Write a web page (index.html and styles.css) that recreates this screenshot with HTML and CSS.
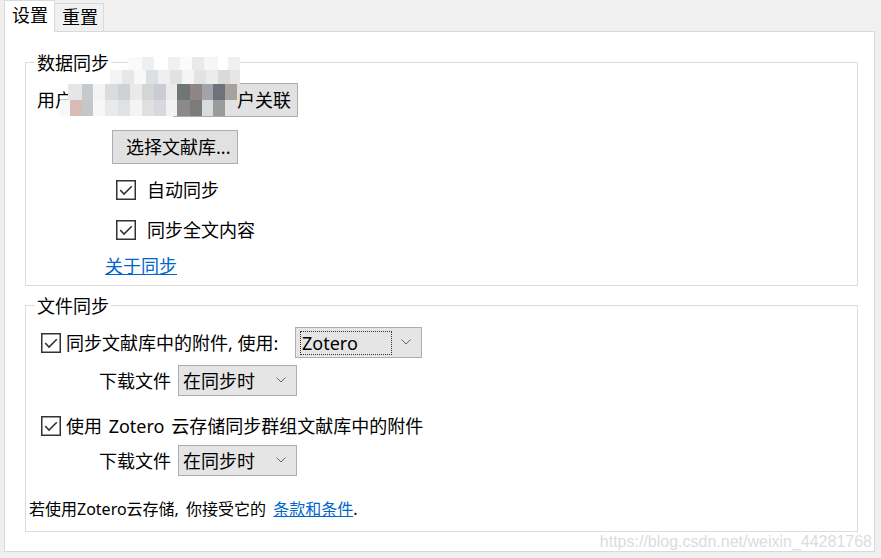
FILE: index.html
```html
<!DOCTYPE html>
<html lang="zh-CN">
<head>
<meta charset="utf-8">
<title>同步设置</title>
<link rel="stylesheet" href="styles.css">
</head>
<body>
<div class="window">
  <div class="tabs">
    <div class="tab active">设置</div>
    <div class="tab">重置</div>
  </div>
  <div class="panel">
    <div class="group g1">
      <span class="legend">数据同步</span>
      <div class="account">
        <span class="acc-label">用户名:</span>
        <button class="btn unlink">取消账户关联</button>
      </div>
      <div class="mosaic">
        <div class="mrow ma"></div>
        <div class="mrow mb"></div>
        <div class="mrow mc"></div>
        <div class="mrow md"></div>
      </div>
      <button class="btn choose">选择文献库...</button>
      <label class="check c-auto">
        <svg class="box" width="20" height="20" viewBox="0 0 20 20"><rect x="0.75" y="0.75" width="18.5" height="18.5" fill="#fff" stroke="#333" stroke-width="1.5"/><polyline points="4.2,10 8,14 15.8,6.2" fill="none" stroke="#333" stroke-width="1.6"/></svg>
        <span>自动同步</span>
      </label>
      <label class="check c-full">
        <svg class="box" width="20" height="20" viewBox="0 0 20 20"><rect x="0.75" y="0.75" width="18.5" height="18.5" fill="#fff" stroke="#333" stroke-width="1.5"/><polyline points="4.2,10 8,14 15.8,6.2" fill="none" stroke="#333" stroke-width="1.6"/></svg>
        <span>同步全文内容</span>
      </label>
      <a class="link about" href="#">关于同步</a>
    </div>

    <div class="group g2">
      <span class="legend">文件同步</span>
      <div class="frow r1">
        <label class="check small opt-label">
          <svg class="box" width="20" height="20" viewBox="0 0 20 20"><rect x="0.75" y="0.75" width="18.5" height="18.5" fill="#fff" stroke="#333" stroke-width="1.5"/><polyline points="4.2,10 8,14 15.8,6.2" fill="none" stroke="#333" stroke-width="1.6"/></svg>
          <span>同步文献库中的附件, 使用:</span>
        </label>
        <div class="select zotero">
          <span class="focus">Zotero</span>
          <svg class="chev" width="10" height="6" viewBox="0 0 10 6"><polyline points="0.5,0.5 5,5 9.5,0.5" fill="none" stroke="#666" stroke-width="1"/></svg>
        </div>
      </div>
      <div class="frow dl">
        <span class="dl-label">下载文件</span>
        <div class="select when">
          <span>在同步时</span>
          <svg class="chev" width="10" height="6" viewBox="0 0 10 6"><polyline points="0.5,0.5 5,5 9.5,0.5" fill="none" stroke="#666" stroke-width="1"/></svg>
        </div>
      </div>
      <div class="frow r2">
        <label class="check small">
          <svg class="box" width="20" height="20" viewBox="0 0 20 20"><rect x="0.75" y="0.75" width="18.5" height="18.5" fill="#fff" stroke="#333" stroke-width="1.5"/><polyline points="4.2,10 8,14 15.8,6.2" fill="none" stroke="#333" stroke-width="1.6"/></svg>
          <span class="wide">使用 Zotero 云存储同步群组文献库中的附件</span>
        </label>
      </div>
      <div class="frow dl">
        <span class="dl-label">下载文件</span>
        <div class="select when">
          <span>在同步时</span>
          <svg class="chev" width="10" height="6" viewBox="0 0 10 6"><polyline points="0.5,0.5 5,5 9.5,0.5" fill="none" stroke="#666" stroke-width="1"/></svg>
        </div>
      </div>
      <div class="terms">若使用Zotero云存储, 你接受它的 <a class="link" href="#">条款和条件</a>.</div>
    </div>
    <div class="watermark">https://blog.csdn.net/weixin_44281768</div>
  </div>
</div>
</body>
</html>
```

FILE: styles.css
```css
* { box-sizing: border-box; }
html, body {
  margin: 0;
  padding: 0;
  background: #f0f0f0;
}
body {
  font-family: "Noto Sans", "Noto Sans CJK SC", sans-serif;
  font-size: 18px;
  line-height: 22px;
  color: #000;
  width: 881px;
  height: 558px;
  overflow: hidden;
}
.tabs {
  display: flex;
  align-items: flex-end;
  height: 31px;
  padding-left: 4px;
}
.tab {
  font-size: 18px;
  line-height: 24px;
  height: 28px;
  padding: 1px 5px 0 7px;
  border: 1px solid #d9d9d9;
  border-left: none;
  border-bottom: none;
  background: #f0f0f0;
}
.tab.active {
  height: 32px;
  margin-bottom: -1px;
  padding: 2px 6px 0 7px;
  border-left: 1px solid #d9d9d9;
  background: #fff;
  position: relative;
  z-index: 1;
}
.panel {
  position: relative;
  margin: 0 6px 0 4px;
  height: 521px;
  border: 1px solid #d9d9d9;
  background: #fff;
  padding: 30px 16px 0 20px;
}
.group {
  position: relative;
  border: 1px solid #dcdcdc;
  display: flex;
  flex-direction: column;
  align-items: flex-start;
}
.g1 { height: 224px; }
.g2 { height: 227px; margin-top: 19px; }
.legend {
  position: absolute;
  top: -11px;
  left: 9px;
  padding: 0 2px;
  background: #fff;
  line-height: 22px;
  z-index: 1;
}
.btn {
  font: inherit;
  color: #000;
  background: #e1e1e1;
  border: 1px solid #adadad;
  height: 34px;
  margin: 0;
  text-align: left;
}
.account {
  display: flex;
  align-items: center;
  height: 34px;
  margin-top: 20px;
  padding-left: 11px;
}
.acc-label { width: 136px; }
.unlink { padding: 0 6px 0 9px; }
.mosaic {
  position: absolute;
  left: 0;
  top: 0;
  z-index: 2;
}
.mrow { position: absolute; }
.ma {
  left: 102px; top: -6px; width: 112px; height: 13px;
  background: linear-gradient(to right, #fafafa 0 14px, #efefef 14px 26px, #ffffff 26px 40px, #f1f1f1 40px 52px, #fbfbfb 52px 64px, #e9e9e9 64px 76px, #f6f6f6 76px 90px, #ffffff 90px 100px, #f0f0f0 100px);
}
.mb {
  left: 84px; top: 7px; width: 130px; height: 14px;
  background: linear-gradient(to right, #f4f4f4 0 12px, #e7e7e7 12px 24px, #f8f8f8 24px 36px, #dde0e3 36px 48px, #efefef 48px 60px, #e2e2e2 60px 72px, #f5f5f5 72px 84px, #e3e3e3 84px 96px, #ececec 96px 108px, #dadada 108px 120px, #e6e6e6 120px);
}
.mc {
  left: 42px; top: 21px; width: 169px; height: 16px;
  background: linear-gradient(to right, #e6e6e6 0 14px, #c6cacd 14px 25px, #f3f3f3 25px 37px, #dcdcdc 37px 50px, #ced2d5 50px 62px, #eaeaea 62px 74px, #d5d5d5 74px 86px, #c9ccd0 86px 98px, #ebebeb 98px 109px, #6f7774 109px 122px, #8f8584 122px 134px, #a3a4a9 134px 145px, #6f727d 145px 157px, #a6a29f 157px);
}
.md {
  left: 34px; top: 37px; width: 177px; height: 16px;
  background: linear-gradient(to right, #f7f7f7 0 10px, #d6bcb4 10px 22px, #c3c7ca 22px 33px, #f7f7f7 33px 45px, #e9e9e9 45px 58px, #dfe2e4 58px 70px, #f4f4f4 70px 82px, #e0e0e0 82px 94px, #d7d9dc 94px 106px, #f2f2f2 106px 117px, #8a8a8a 117px 130px, #7d7a7a 130px 142px, #d8dcdf 142px 153px, #9b9b9b 153px 165px, #e2e2e2 165px);
}
.choose {
  margin-top: 13px;
  margin-left: 86px;
  width: 126px;
  padding: 0 0 0 13px;
  white-space: nowrap;
}
.check {
  display: flex;
  align-items: center;
  height: 24px;
  gap: 11px;
  white-space: nowrap;
}
.check .box { flex: none; display: block; }
.c-auto { margin-top: 14px; margin-left: 90px; }
.c-full { margin-top: 16px; margin-left: 90px; }
.link {
  color: #0066cc;
  text-decoration: underline;
}
.about {
  display: block;
  margin-top: 12px;
  margin-left: 79px;
  line-height: 24px;
  height: 24px;
}
.frow {
  display: flex;
  align-items: center;
}
.check.small { gap: 5px; }
.wide { word-spacing: 2px; }
.r1 { margin-top: 21px; height: 31px; padding-left: 15px; }
.opt-label { width: 254px; }
.dl { margin-top: 7px; height: 31px; padding-left: 73px; }
.r2 { margin-top: 18px; height: 24px; padding-left: 15px; }
.dl-label { width: 79px; white-space: nowrap; }
.select {
  position: relative;
  display: flex;
  align-items: center;
  height: 31px;
  border: 1px solid #adadad;
  background: #e5e5e5;
  font-size: 18px;
  padding-left: 4px;
}
.zotero { width: 127px; }
.when { width: 119px; }
.focus {
  display: block;
  width: 92px;
  height: 24px;
  line-height: 22px;
  border: 1px dotted #333;
  padding-left: 1px;
}
.chev {
  position: absolute;
  right: 10px;
  top: 11px;
}
.terms {
  margin-top: 22px;
  height: 22px;
  line-height: 22px;
  font-size: 16px;
  word-spacing: 3px;
  padding-left: 3px;
  white-space: nowrap;
}
.watermark {
  position: absolute;
  right: 2px;
  bottom: 0;
  font-family: "Liberation Sans", Arial, sans-serif;
  font-size: 16px;
  line-height: 19px;
  color: #dcdcdc;
}
```
